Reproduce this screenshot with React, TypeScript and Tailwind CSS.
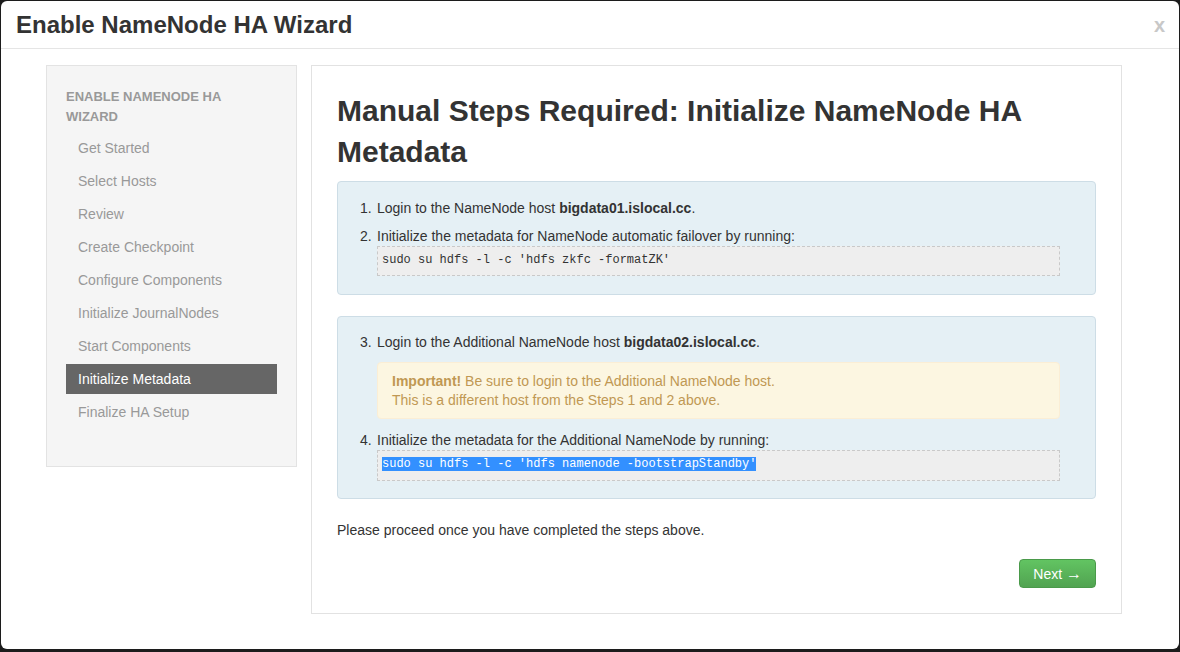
const steps = [
  "Get Started",
  "Select Hosts",
  "Review",
  "Create Checkpoint",
  "Configure Components",
  "Initialize JournalNodes",
  "Start Components",
  "Initialize Metadata",
  "Finalize HA Setup",
];

const ACTIVE = "Initialize Metadata";

export default function App() {
  return (
    <div className="h-[652px] w-[1180px] overflow-hidden bg-[#1c1c1c] pt-px pl-px pr-px pb-[3px] font-['Liberation_Sans',Arial,sans-serif] text-[14px] text-[#333]">
      <div className="flex h-full flex-col rounded-[6px] bg-white">
        {/* Header */}
        <div className="flex h-[48px] items-center justify-between border-b border-[#e5e5e5] pl-[15px] pr-[14px]">
          <h3 className="text-[24px] font-bold leading-[30px] text-[#333]">
            Enable NameNode HA Wizard
          </h3>
          <button className="text-[20px] font-bold leading-none text-[#c8c8c8]">
            x
          </button>
        </div>

        {/* Body */}
        <div className="flex items-start gap-[14px] pl-[45px] pt-[16px]">
          {/* Sidebar */}
          <div className="w-[251px] border border-[#e3e3e3] bg-[#f5f5f5] pt-[21px] pb-[39px] pl-[19px] pr-[19px]">
            <div className="max-w-[190px] text-[13px] font-bold uppercase leading-[20px] text-[#999]">
              Enable NameNode HA Wizard
            </div>
            <ul className="mt-[6px] flex flex-col gap-[3px]">
              {steps.map((s) => (
                <li
                  key={s}
                  className={
                    s === ACTIVE
                      ? "h-[30px] bg-[#666] pl-[12px] leading-[30px] text-white"
                      : "h-[30px] pl-[12px] leading-[30px] text-[#999]"
                  }
                >
                  {s}
                </li>
              ))}
            </ul>
          </div>

          {/* Main */}
          <div className="w-[811px] border border-[#e2e2e2] px-[25px] pt-[24px] pb-[25px]">
            <h2 className="text-[30px] font-bold leading-[41px] text-[#333]">
              Manual Steps Required: Initialize NameNode HA Metadata
            </h2>

            <div className="mt-[9px] rounded-[4px] border border-[#cddde6] bg-[#e5f0f5] pt-[16px] pb-[18px] pl-[22px] pr-[35px]">
              <ol className="flex flex-col gap-[8px]">
                <li className="flex leading-[20px]">
                  <span className="w-[17px]">1.</span>
                  <span>
                    Login to the NameNode host <b>bigdata01.islocal.cc</b>.
                  </span>
                </li>
                <li className="flex leading-[20px]">
                  <span className="w-[17px]">2.</span>
                  <div className="flex-1">
                    <div>Initialize the metadata for NameNode automatic failover by running:</div>
                    <div className="h-[30px] border border-dashed border-[#c9c9c9] bg-[#eee] pl-[4px] font-['Liberation_Mono','Courier_New',monospace] text-[12px] leading-[27px] text-[#333]">
                      sudo su hdfs -l -c 'hdfs zkfc -formatZK'
                    </div>
                  </div>
                </li>
              </ol>
            </div>

            <div className="mt-[21px] rounded-[4px] border border-[#cddde6] bg-[#e5f0f5] pt-[15px] pb-[17px] pl-[22px] pr-[35px]">
              <ol className="flex flex-col">
                <li className="flex leading-[20px]">
                  <span className="w-[17px]">3.</span>
                  <div className="flex-1">
                    <div>
                      Login to the Additional NameNode host <b>bigdata02.islocal.cc</b>.
                    </div>
                    <div className="mt-[10px] rounded-[4px] border border-[#fbeed5] bg-[#fcf6e1] px-[14px] pt-[9px] pb-[8px] leading-[19px] text-[#c09853]">
                      <b>Important!</b> Be sure to login to the Additional NameNode host.
                      <br />
                      This is a different host from the Steps 1 and 2 above.
                    </div>
                  </div>
                </li>
                <li className="mt-[11px] flex leading-[20px]">
                  <span className="w-[17px]">4.</span>
                  <div className="flex-1">
                    <div>Initialize the metadata for the Additional NameNode by running:</div>
                    <div className="h-[31px] border border-dashed border-[#c9c9c9] bg-[#eee] pl-[4px] pt-[6px] font-['Liberation_Mono','Courier_New',monospace] text-[12px] leading-[15px] text-[#333]">
                      <span className="bg-[#3390ff] text-white">
                        sudo su hdfs -l -c 'hdfs namenode -bootstrapStandby'
                      </span>
                    </div>
                  </div>
                </li>
              </ol>
            </div>

            <p className="mt-[21px] leading-[20px]">
              Please proceed once you have completed the steps above.
            </p>

            <div className="mt-[19px] flex justify-end">
              <button className="h-[29px] rounded-[4px] border border-[#4a9a4a] bg-gradient-to-b from-[#62c462] to-[#51a351] px-[13px] text-[14px] leading-[27px] text-white">
                Next <span className="text-[16px]">→</span>
              </button>
            </div>
          </div>
        </div>
      </div>
    </div>
  );
}
